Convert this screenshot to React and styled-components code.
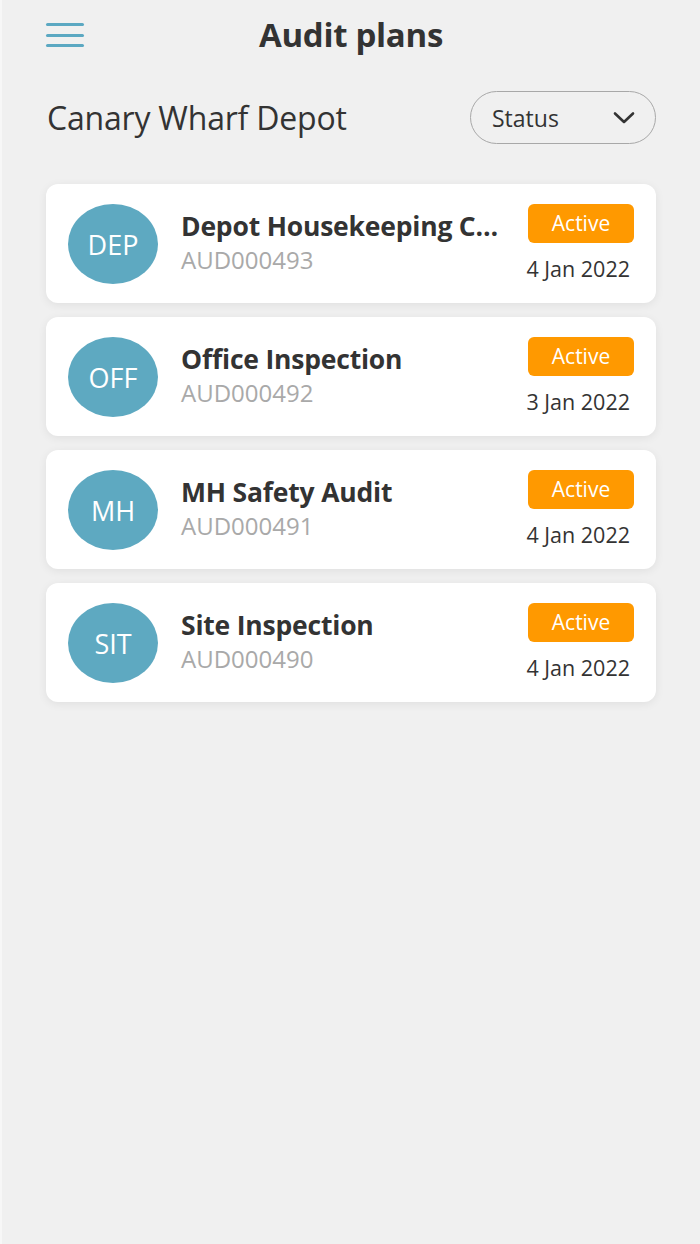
import React from "react";
import styled, { createGlobalStyle } from "styled-components";

const GlobalStyle = createGlobalStyle`
  html, body {
    margin: 0;
    padding: 0;
    background: #f0f0f0;
  }
  body {
    font-family: "Open Sans", "Noto Sans", sans-serif;
    color: #333;
  }
`;

const Page = styled.div`
  width: 700px;
  min-height: 1244px;
  box-sizing: border-box;
  background: #f0f0f0;
  border-left: 2px solid #f7f7f7;
  padding: 0 44px 0 44px;
`;

const TopBar = styled.header`
  position: relative;
  height: 68px;
  display: flex;
  align-items: center;
  justify-content: center;
`;

const MenuButton = styled.button`
  position: absolute;
  left: 0;
  top: 23px;
  width: 38px;
  height: 24px;
  padding: 0;
  border: 0;
  background: none;
  display: flex;
  flex-direction: column;
  justify-content: space-between;
  cursor: pointer;

  span {
    display: block;
    height: 3px;
    border-radius: 2px;
    background: #5ba8c2;
  }
`;

const Title = styled.h1`
  margin: 0;
  font-size: 33px;
  font-weight: 700;
  color: #333;
  letter-spacing: -0.3px;
`;

const SubHeader = styled.div`
  display: flex;
  align-items: center;
  justify-content: space-between;
  margin-top: 23px;
  margin-bottom: 40px;
  padding-left: 1px;
`;

const Depot = styled.h2`
  margin: 0;
  font-size: 32px;
  font-weight: 400;
  color: #333;
  letter-spacing: -0.2px;
`;

const StatusSelect = styled.button`
  width: 186px;
  height: 53px;
  box-sizing: border-box;
  border: 1.5px solid #a8a8a8;
  border-radius: 27px;
  background: transparent;
  display: flex;
  align-items: center;
  justify-content: space-between;
  padding: 0 20px 0 21px;
  font-family: inherit;
  font-size: 23px;
  color: #333;
  cursor: pointer;
`;

const List = styled.div`
  display: flex;
  flex-direction: column;
  gap: 14px;
`;

const Card = styled.div`
  height: 119px;
  box-sizing: border-box;
  background: #fff;
  border-radius: 12px;
  box-shadow: 0 2px 10px rgba(0, 0, 0, 0.07);
  display: flex;
  align-items: flex-start;
  padding: 20px 22px 0 22px;
`;

const Avatar = styled.div`
  flex: none;
  width: 90px;
  height: 80px;
  border-radius: 50%;
  background: #5ea9c1;
  color: #fff;
  display: flex;
  align-items: center;
  justify-content: center;
  font-size: 27px;
  font-weight: 400;
`;

const Info = styled.div`
  flex: 1;
  min-width: 0;
  margin-left: 23px;
  padding-top: 4px;
`;

const Name = styled.div`
  font-size: 26.5px;
  font-weight: 700;
  color: #333;
  white-space: nowrap;
  overflow: hidden;
  text-overflow: ellipsis;
  line-height: 36px;
  letter-spacing: -0.2px;
`;

const Code = styled.div`
  font-size: 24px;
  color: #a9a9a9;
  line-height: 32px;
`;

const Side = styled.div`
  flex: none;
  margin-left: 20px;
  display: flex;
  flex-direction: column;
  align-items: flex-end;
`;

const Badge = styled.div`
  width: 106px;
  height: 39px;
  border-radius: 6px;
  background: ${(p) => p.color || "#ff9900"};
  color: #fff;
  font-size: 21px;
  line-height: 1;
  display: flex;
  align-items: center;
  justify-content: center;
`;

const DateText = styled.div`
  margin-top: 11px;
  margin-right: 4px;
  font-size: 21.5px;
  color: #333;
`;

const plans = [
  { initials: "DEP", name: "Depot Housekeeping Checklist", code: "AUD000493", date: "4 Jan 2022" },
  { initials: "OFF", name: "Office Inspection", code: "AUD000492", date: "3 Jan 2022" },
  { initials: "MH", name: "MH Safety Audit", code: "AUD000491", date: "4 Jan 2022" },
  { initials: "SIT", name: "Site Inspection", code: "AUD000490", date: "4 Jan 2022" },
];

const Chevron = () => (
  <svg width="22" height="14" viewBox="0 0 22 14" fill="none">
    <path d="M2 2.5l9 8.5 9-8.5" stroke="#333" strokeWidth="2.6" strokeLinecap="round" strokeLinejoin="round" />
  </svg>
);

const App = () => {
  return (
    <>
      <GlobalStyle />
      <Page>
        <TopBar>
          <MenuButton aria-label="menu">
            <span />
            <span />
            <span />
          </MenuButton>
          <Title>Audit plans</Title>
        </TopBar>

        <SubHeader>
          <Depot>Canary Wharf Depot</Depot>
          <StatusSelect>
            Status
            <Chevron />
          </StatusSelect>
        </SubHeader>

        <List>
          {plans.map((plan) => (
            <Card key={plan.code}>
              <Avatar>{plan.initials}</Avatar>
              <Info>
                <Name>{plan.name}</Name>
                <Code>{plan.code}</Code>
              </Info>
              <Side>
                <Badge>Active</Badge>
                <DateText>{plan.date}</DateText>
              </Side>
            </Card>
          ))}
        </List>
      </Page>
    </>
  );
};

export default App;
